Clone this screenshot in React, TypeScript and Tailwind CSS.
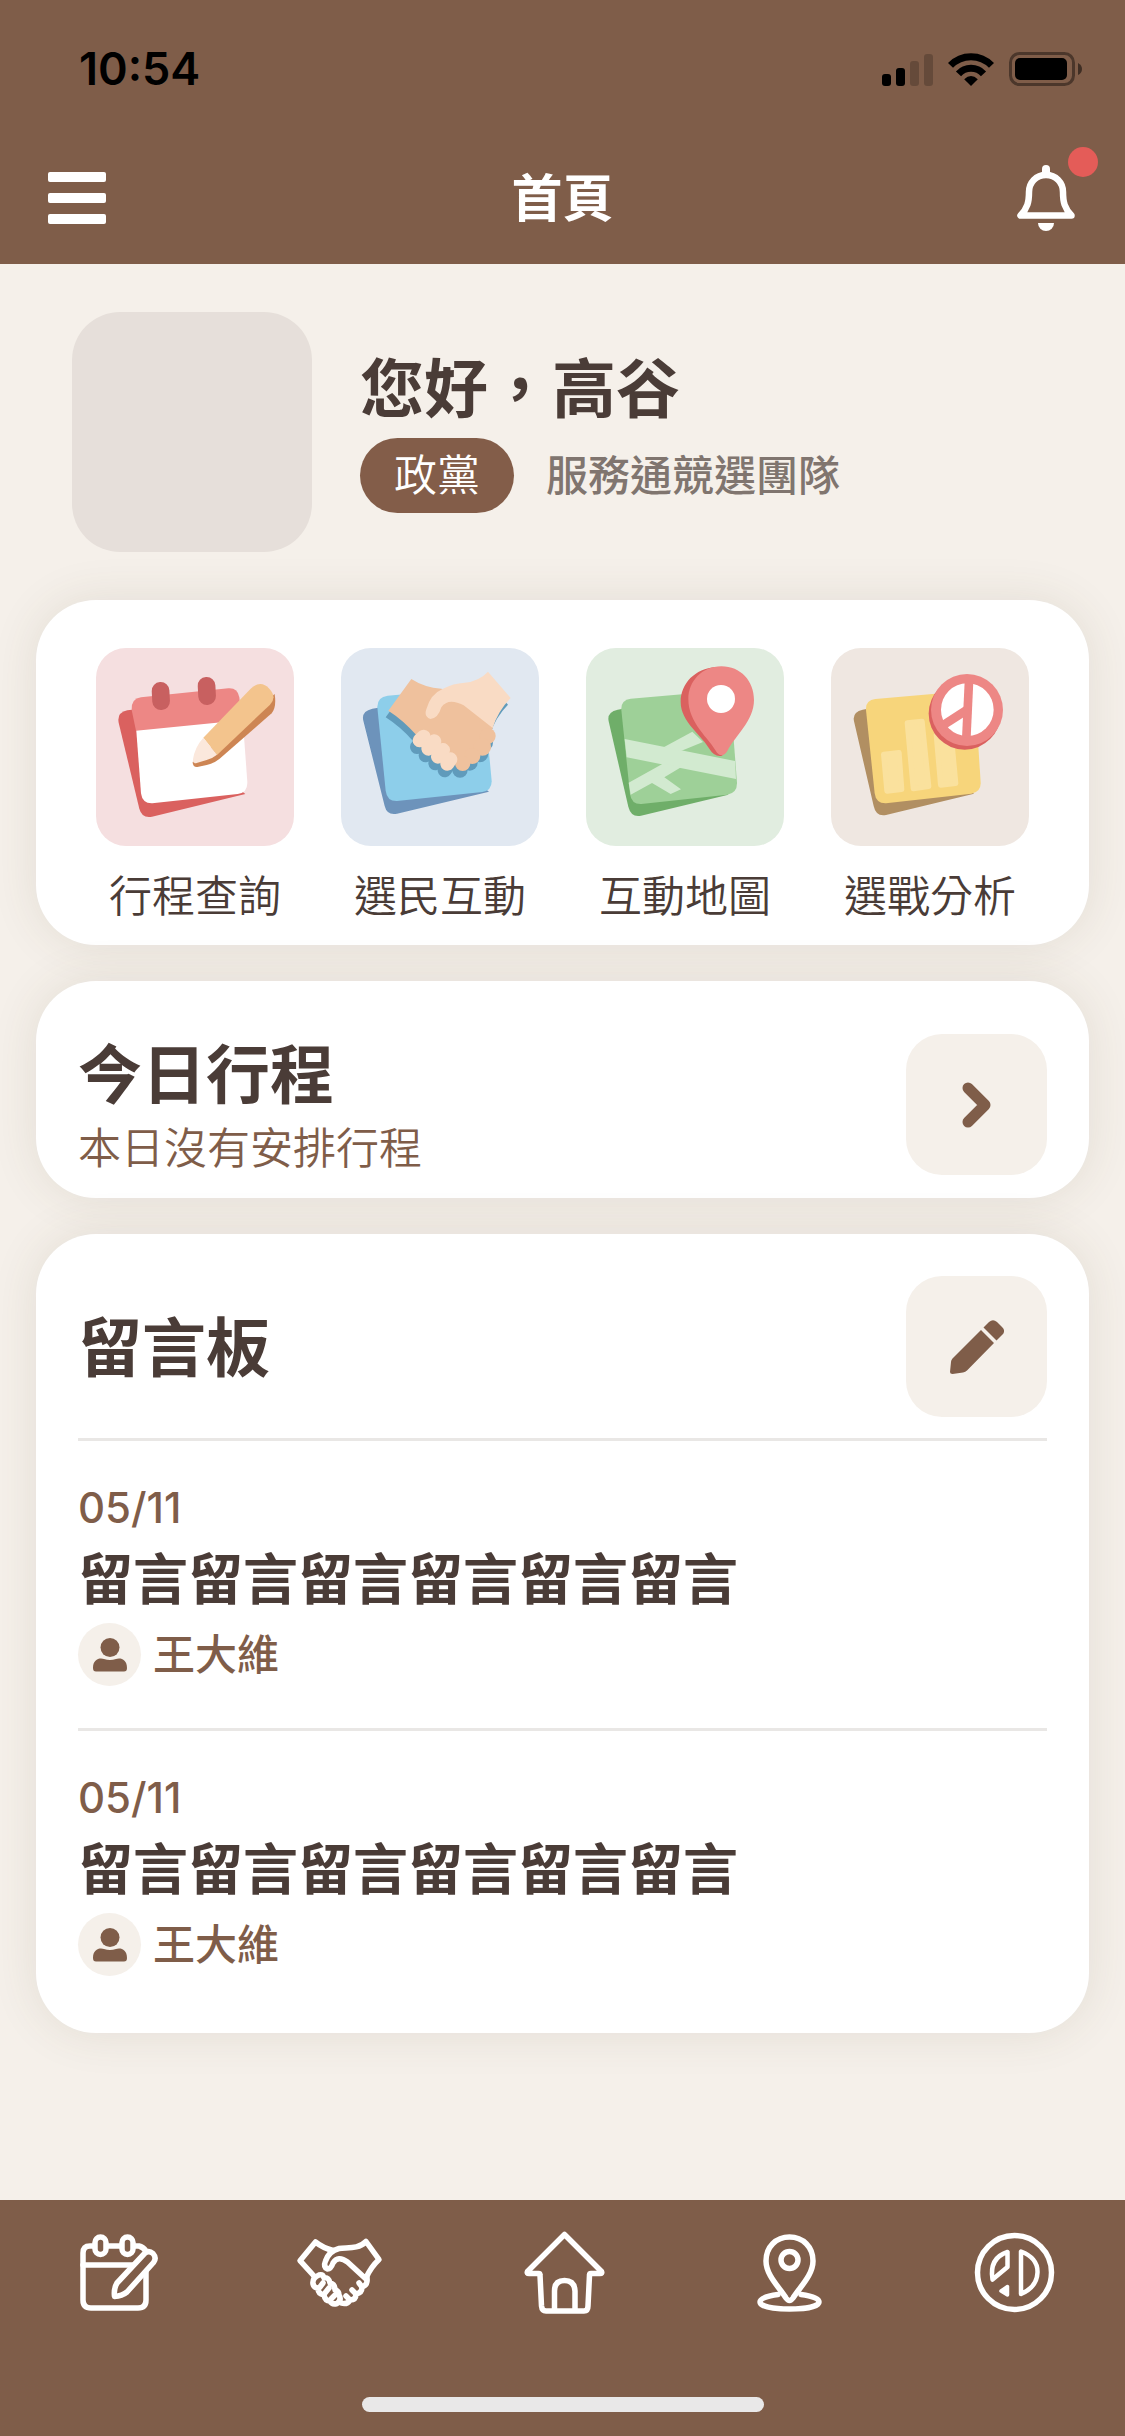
import type { ReactNode } from "react";

/* ---------- Status bar ---------- */

function SignalIcon() {
  return (
    <svg aria-hidden="true" className="h-[33px] w-[51px]" viewBox="0 0 51 33">
      <rect height="12" rx="3" width="9" x="0" y="21" />
      <rect height="18" rx="3" width="9" x="14" y="15" />
      <rect height="25" opacity="0.2" rx="3" width="9" x="28" y="8" />
      <rect height="32" opacity="0.2" rx="3" width="9" x="42" y="1" />
    </svg>
  );
}

function WifiIcon() {
  return (
    <svg aria-hidden="true" className="h-[33px] w-[46px]" viewBox="0 0 46 33">
      <g fill="none" stroke="#000" strokeWidth="7">
        <path d="M2.5 12.4A28.5 28.5 0 0 1 43.5 12.4" />
        <path d="M10.5 20.8A17 17 0 0 1 35.5 20.8" />
      </g>
      <path d="M16.2 26.2Q23 20 29.8 26.2L23 33Z" />
    </svg>
  );
}

function BatteryIcon() {
  return (
    <svg aria-hidden="true" className="h-[34px] w-[73px]" viewBox="0 0 73 34">
      <rect
        fill="none"
        height="31"
        opacity="0.4"
        rx="9"
        stroke="#000"
        strokeWidth="3"
        width="63"
        x="1.5"
        y="1.5"
      />
      <rect height="22" rx="5" width="52" x="6" y="6" />
      <path d="M69 11Q73 13 73 17T69 23Z" opacity="0.5" />
    </svg>
  );
}

function StatusBar() {
  return (
    <div className="flex h-[138px] items-center justify-between pl-[79px] pr-[43px]">
      <span className="font-['Inter',sans-serif] text-[45px] font-semibold leading-[54px] text-black">
        10:54
      </span>
      <div className="flex items-center gap-[15px]">
        <SignalIcon />
        <WifiIcon />
        <BatteryIcon />
      </div>
    </div>
  );
}

/* ---------- App bar ---------- */

function AppBar() {
  return (
    <div className="grid h-[126px] grid-cols-3 items-center px-12 pb-[6px]">
      <button aria-label="選單" className="flex w-[58px] flex-col gap-[11px]" type="button">
        <span className="h-[10px] rounded-[2px] bg-white" />
        <span className="h-[10px] rounded-[2px] bg-white" />
        <span className="h-[10px] rounded-[2px] bg-white" />
      </button>
      <h1 className="pb-[6px] text-center text-[51px] font-bold leading-[72px] text-white">
        首頁
      </h1>
      <button aria-label="通知" className="relative justify-self-end" type="button">
        <svg aria-hidden="true" className="h-[66px] w-[60px]" viewBox="0 0 60 66">
          <path d="M29 4V9" stroke="#fff" strokeLinecap="round" strokeWidth="8" />
          <path
            d="M29 10C19 10 12 17.5 12 27C12 37 10.5 43 3.5 50.5H54.5C47.5 43 46 37 46 27C46 17.5 39 10 29 10Z"
            fill="none"
            stroke="#fff"
            strokeLinejoin="round"
            strokeWidth="6.5"
          />
          <path d="M21 58H37A8 8 0 0 1 21 58Z" fill="#fff" />
        </svg>
        <span className="absolute -right-[21px] -top-[18px] size-[30px] rounded-full bg-[#e45c58]" />
      </button>
    </div>
  );
}

/* ---------- Shortcut illustrations ---------- */

function CalendarArt() {
  return (
    <svg aria-hidden="true" className="size-full" viewBox="108 84 594 594">
      <path
        d="M230 268L202 271Q170 278 176 308L238 566Q246 596 276 590L556 522Z"
        fill="#da615f"
      />
      <path
        d="M228 320L548 295L562 486Q563 518 533 522L277 550Q247 551 243 520Z"
        fill="#fff"
      />
      <path
        d="M215 270Q213 236 243 232L505 205Q533 203 538 232L545 301L228 332Z"
        fill="#ed8785"
      />
      <rect fill="#c86060" height="84" rx="26" transform="rotate(-3 303 228)" width="53" x="276" y="186" />
      <rect fill="#c86060" height="84" rx="26" transform="rotate(-3 440 213)" width="53" x="414" y="171" />
      <path
        d="M398 426Q398 442 412 441L440 435Q462 430 478 417L635 280Q650 262 644 222Z"
        fill="#cd8553"
      />
      <path d="M430 353L572 206Q602 178 628 206Q652 232 630 254L471 405Z" fill="#f3c48d" />
      <path
        d="M430 353L471 404Q456 416 440 420L410 429Q397 432 399 418Q404 382 430 353Z"
        fill="#fbe8dc"
      />
    </svg>
  );
}

function ShakingHands({ dark, light }: { dark: string; light: string }) {
  return (
    <>
      <path
        d="M1055 177Q1095 203 1145 206L1215 230L1300 322L1270 400L1200 442L1070 345Q1030 300 986 272Z"
        fill={dark}
      />
      <g fill={dark}>
        <circle cx="1284" cy="348" r="24" />
        <circle cx="1268" cy="381" r="26" />
        <circle cx="1238" cy="408" r="24" />
        <circle cx="1209" cy="430" r="23" />
      </g>
      <path
        d="M1285 155L1353 234Q1315 272 1299 324L1212 256Q1166 232 1145 262Q1135 296 1112 297Q1092 290 1100 268Q1112 222 1150 206Q1180 190 1215 188Q1258 184 1285 155Z"
        fill={light}
      />
      <g stroke={light} strokeLinecap="round" strokeWidth="42">
        <path d="M1092 350L1080 361" />
        <path d="M1124 364L1106 386" />
        <path d="M1150 390L1135 410" />
        <path d="M1172 418L1163 431" />
      </g>
    </>
  );
}

function HandshakeArt() {
  return (
    <svg aria-hidden="true" className="size-full" viewBox="844 84 594 594">
      <path
        d="M965 262L938 266Q904 274 911 302L975 558Q982 587 1012 581L1288 515Z"
        fill="#6d93bb"
      />
      <path
        d="M953 262Q952 231 984 227L1240 204L1272 230L1296 482Q1297 512 1268 516L1012 543Q982 544 978 512Z"
        fill="#8dceea"
      />
      <g transform="translate(-8 20)">
        <ShakingHands dark="#609bbb" light="#609bbb" />
      </g>
      <ShakingHands dark="#efc19d" light="#f9dbc4" />
    </svg>
  );
}

function MapArt() {
  return (
    <svg aria-hidden="true" className="size-full" viewBox="81 84 594 594">
      <path
        d="M200 265L176 269Q143 276 149 304L208 560Q216 593 246 587L508 524Z"
        fill="#6fae69"
      />
      <path
        d="M187 270Q185 240 215 236L490 212L515 240L534 488Q535 519 505 524L247 552Q217 553 213 522Z"
        fill="#9ed098"
      />
      <g fill="#d2ead0">
        <path d="M197 357L528 423L531 477L203 412Z" />
        <path d="M314 382L400 335L432 366L364 394Z" />
        <path d="M209 488L314 430L366 442L316 472L366 508L335 522L279 489L215 524Z" />
      </g>
      <path
        d="M470 141C408 146 365 190 365 246C365 306 428 345 452 388Q466 412 490 407Z"
        fill="#da615f"
      />
      <path
        d="M487 139C545 139 585 183 585 240C585 302 530 345 505 393Q490 416 474 398C450 354 388 310 388 237C388 183 430 139 487 139Z"
        fill="#ed8785"
      />
      <circle cx="486" cy="237" fill="#fff" r="42" />
    </svg>
  );
}

function AnalysisArt() {
  return (
    <svg aria-hidden="true" className="size-full" viewBox="817 84 594 594">
      <path
        d="M935 265L912 269Q880 276 886 304L945 558Q952 591 982 585L1246 521Z"
        fill="#b18f62"
      />
      <path
        d="M922 270Q920 240 950 237L1225 213L1250 240L1266 488Q1267 516 1238 521L982 550Q952 551 948 520Z"
        fill="#f7d57b"
      />
      <g fill="#fae19d" stroke="#fae19d" strokeLinejoin="round" strokeWidth="16">
        <path d="M975 403L1021 398L1029 508L985 513Z" />
        <path d="M1046 309L1090 304L1110 499L1064 506Z" />
        <path d="M1133 345L1177 340L1191 490L1146 495Z" />
      </g>
      <circle cx="1218" cy="281" fill="#da615f" r="108" />
      <circle cx="1225" cy="270" fill="#ed8785" r="108" />
      <circle cx="1226" cy="269" fill="#fff" r="79" />
      <g stroke="#ed8785" strokeWidth="26">
        <path d="M1231 184L1223 354" />
        <path d="M1229 267L1142 323" />
      </g>
    </svg>
  );
}

type Shortcut = { label: string; tile: string; art: ReactNode };

const SHORTCUTS: Shortcut[] = [
  { label: "行程查詢", tile: "bg-[#f5dfe0]", art: <CalendarArt /> },
  { label: "選民互動", tile: "bg-[#e1e8f1]", art: <HandshakeArt /> },
  { label: "互動地圖", tile: "bg-[#e1ede0]", art: <MapArt /> },
  { label: "選戰分析", tile: "bg-[#efe7e1]", art: <AnalysisArt /> },
];

/* ---------- Content ---------- */

function Card({ className, children }: { className: string; children: ReactNode }) {
  return (
    <section
      className={`rounded-[60px] bg-white shadow-[0_0_48px_rgba(80,70,50,0.11)] ${className}`}
    >
      {children}
    </section>
  );
}

function Profile() {
  return (
    <section className="flex items-center gap-12 px-9">
      <div className="size-60 shrink-0 rounded-[48px] bg-[#e6dfda]" />
      <div className="pb-[6px]">
        <h2 className="text-[64px] font-bold leading-[78px] text-[#4a3c37]">您好，高谷</h2>
        <div className="mt-[15px] flex items-center gap-8">
          <span className="rounded-full bg-[#835d49] px-[34px] pb-[6px] text-[43px] font-[350] leading-[69px] text-white">
            政黨
          </span>
          <span className="pb-[6px] text-[42px] font-medium leading-[69px] text-[#80756f]">
            服務通競選團隊
          </span>
        </div>
      </div>
    </section>
  );
}

function Shortcuts() {
  return (
    <Card className="px-[60px] pb-[22px] pt-12">
      <ul className="flex justify-between">
        {SHORTCUTS.map(({ label, tile, art }) => (
          <li key={label}>
            <a className="flex w-[198px] flex-col items-center" href="#shortcut">
              <span className={`size-[198px] overflow-hidden rounded-[30px] ${tile}`}>{art}</span>
              <span className="mt-[17px] whitespace-nowrap text-[43px] font-[350] leading-[60px] text-[#4a3c37]">
                {label}
              </span>
            </a>
          </li>
        ))}
      </ul>
    </Card>
  );
}

function SquareButton({ label, children }: { label: string; children: ReactNode }) {
  return (
    <button
      aria-label={label}
      className="flex size-[141px] shrink-0 items-center justify-center rounded-[36px] bg-[#f5f0ea] text-[#7f5d49]"
      type="button"
    >
      {children}
    </button>
  );
}

function Today() {
  return (
    <Card className="flex items-center justify-between px-[42px] pb-[23px] pt-[53px]">
      <div>
        <h2 className="text-[64px] font-bold leading-[72px] text-[#4a3c37]">今日行程</h2>
        <p className="mt-[9px] text-[43px] font-[350] leading-[60px] text-[#7f5d49]">
          本日沒有安排行程
        </p>
      </div>
      <SquareButton label="查看今日行程">
        <svg aria-hidden="true" className="h-[46px] w-[30px]" fill="none" viewBox="0 0 30 46">
          <path
            d="M6 6L23 23L6 40"
            stroke="currentColor"
            strokeLinecap="round"
            strokeLinejoin="round"
            strokeWidth="11"
          />
        </svg>
      </SquareButton>
    </Card>
  );
}

type Message = { id: number; date: string; title: string; author: string };

const MESSAGES: Message[] = [
  { id: 1, date: "05/11", title: "留言留言留言留言留言留言", author: "王大維" },
  { id: 2, date: "05/11", title: "留言留言留言留言留言留言", author: "王大維" },
];

function MessageItem({ message }: { message: Message }) {
  return (
    <li className="border-t-[3px] border-[#e9e7e5] pb-[42px] pt-[37px]">
      <time className="block font-['Inter',sans-serif] text-[42px] font-medium leading-[60px] text-[#7f5d49]">
        {message.date}
      </time>
      <h3 className="text-[55px] font-bold leading-[75px] text-[#4a3c37]">{message.title}</h3>
      <div className="mt-[10px] flex items-center gap-3">
        <span className="flex size-[63px] items-center justify-center rounded-full bg-[#f5f0ea]">
          <svg aria-hidden="true" className="size-[34px]" fill="#7f5d49" viewBox="0 0 34 34">
            <circle cx="17" cy="9.5" r="9.5" />
            <path d="M0 30C0 23 4 20.5 8 20.5Q10 20.5 11 21Q17 23 23 21Q24 20.5 26 20.5C30 20.5 34 23 34 30Q34 33.5 31 33.5H3Q0 33.5 0 30Z" />
          </svg>
        </span>
        <span className="pb-[6px] text-[42px] font-medium leading-[57px] text-[#7f5d49]">
          {message.author}
        </span>
      </div>
    </li>
  );
}

function MessageBoard() {
  return (
    <Card className="px-[42px] pb-[15px] pt-[42px]">
      <div className="flex items-center justify-between pb-[21px]">
        <h2 className="pb-2 text-[64px] font-bold leading-[72px] text-[#4a3c37]">留言板</h2>
        <SquareButton label="新增留言">
          <svg aria-hidden="true" className="size-[54px]" fill="currentColor" viewBox="0 0 54 54">
            <path d="M31 10L44 23L17 50.5Q15.5 52 13 52.5L2.5 54Q0 54 0 52L1 42Q1 40 2.5 38.5Z" />
            <path d="M33.5 7.5L39 2Q43 -1.5 47 2L52 7Q56 11 52.5 14.5L46.5 20.5Z" />
          </svg>
        </SquareButton>
      </div>
      <ul>
        {MESSAGES.map((message) => (
          <MessageItem key={message.id} message={message} />
        ))}
      </ul>
    </Card>
  );
}

/* ---------- Tab bar ---------- */

const TABS: { label: string; icon: ReactNode }[] = [
  {
    label: "行程",
    icon: (
      <>
        <path d="M29 19H25Q18 19 18 26V73Q18 81 26 81H73Q81 81 81 73V45" />
        <path d="M43 19H56M70 19H74Q78 20 81 24M18 38H67" />
        <rect height="17.5" rx="5.5" width="11" x="30" y="10" />
        <rect height="17.5" rx="5.5" width="11" x="57" y="10" />
        <path d="M52 56L80 26Q84 23 88 26.5Q92 31 88.5 35.5L62 65Q57 69 49.5 69.5Q48.5 62 52 56Z" />
      </>
    ),
  },
  {
    label: "選民",
    icon: (
      <>
        <path d="M24 49L10 33.7L25.5 15Q33 21 43 23.5" />
        <path d="M76 52L57.5 35Q48 28 43 36Q41 42 37.5 42Q33 40 35.5 34Q39 24 49 21.5C56 20 68 23 76 14.5L89 32.5Q81 40 76.5 50" />
        <path d="M29 48Q22 51 23 57Q24 61 28 61Q28 67 34 68Q35 74 40 74Q42 78 47 76.5Q52 73 49 68Q49 64 45 63Q45 57 40 56Q39 50 34 51Q33 47 29 48Z" />
        <path d="M33 56L30 60M39 61L35 66M45 68L41 72" />
        <path d="M77 51Q78 58 72 60Q72 66 66 67Q66 73 60 73Q57 78 51 76" />
        <path d="M72 60L69 56M66 67L62 63M60 73L56 69" />
      </>
    ),
  },
  {
    label: "首頁",
    icon: (
      <>
        <path d="M49.5 7.5L86.5 44.5Q87.5 46.5 85 46.5H76Q74.5 46.5 74.5 48L73 79Q73 84 69 84H31Q27 84 26.5 79L25 48Q25 46.5 23.5 46.5H14Q11.5 46.5 12.5 44.5Z" />
        <path d="M39.5 83V64Q39.5 53.5 49.5 53.5T60 64V83" />
      </>
    ),
  },
  {
    label: "地圖",
    icon: (
      <>
        <path d="M49.5 10C36 10 26 20 26 34C26 48 39 60 46 71Q49.5 76 53 71C60 60 73 48 73 34C73 20 63 10 49.5 10Z" />
        <circle cx="49.5" cy="33" r="8.5" />
        <path d="M38 67.5C27 69 20 71.5 20 75C20 79.5 33 82 49.5 82C66 82 79 79.5 79 75C79 71.5 72 69 61 67.5" />
      </>
    ),
  },
  {
    label: "分析",
    icon: (
      <>
        <circle cx="49.5" cy="45.5" r="37" />
        <path d="M56 24.5V67Q72 60 72.5 45.5T56 24.5Z" strokeWidth="4.5" />
        <path d="M42.5 25V40L27.5 52.5Q24 31 42.5 25Z" strokeWidth="4.5" />
        <path d="M42.5 59.5V68L36 64Z" fill="#fff" strokeWidth="3.5" />
      </>
    ),
  },
];

function TabBar() {
  return (
    <footer className="bg-[#7f5d49] pb-6 pt-[27px]">
      <nav className="grid grid-cols-5">
        {TABS.map(({ label, icon }) => (
          <a aria-label={label} className="flex justify-center" href="#tab" key={label}>
            <svg
              aria-hidden="true"
              className="h-[90px] w-24"
              fill="none"
              stroke="#fff"
              strokeLinecap="round"
              strokeLinejoin="round"
              strokeWidth="5.5"
              viewBox="0 0 96 90"
            >
              {icon}
            </svg>
          </a>
        ))}
      </nav>
      <div className="mx-auto mt-20 h-[15px] w-[402px] rounded-full bg-[#e9e8e8]" />
    </footer>
  );
}

export default function App() {
  return (
    <div className="flex min-h-screen flex-col bg-[#f5f0ea] font-['Noto_Sans_CJK_TC',sans-serif]">
      <header className="bg-[#7f5d49]">
        <StatusBar />
        <AppBar />
      </header>
      <main className="flex flex-1 flex-col gap-9 px-9 pb-12 pt-12">
        <div className="mb-3">
          <Profile />
        </div>
        <Shortcuts />
        <Today />
        <MessageBoard />
      </main>
      <TabBar />
    </div>
  );
}
